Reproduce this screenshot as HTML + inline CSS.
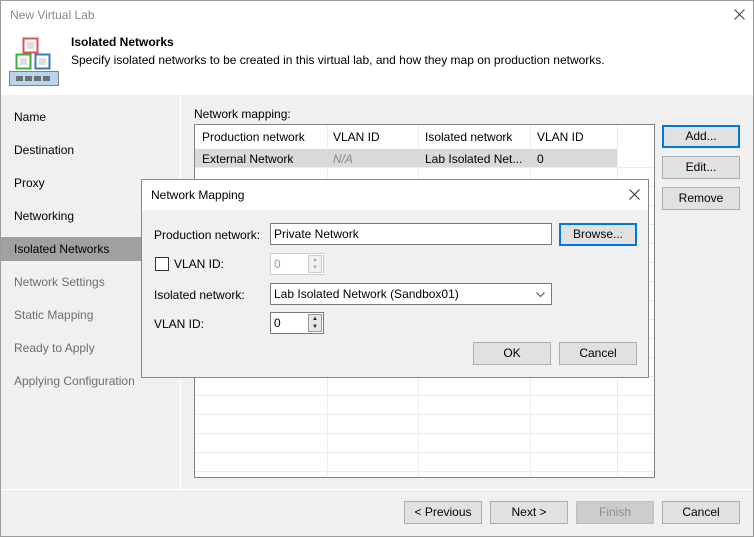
<!DOCTYPE html><html><head><style>
*{box-sizing:border-box;margin:0;padding:0}
body{width:754px;height:537px;position:relative;overflow:hidden;font-family:"Liberation Sans",sans-serif;font-size:12px;color:#000;background:#f0f0f0}
.a{position:absolute}
.btn{position:absolute;border:1px solid #adadad;background:#e1e1e1;text-align:center;line-height:21px;font-size:12px}
.nav{position:absolute;left:14px;font-size:12px}
.g{color:#6d6d6d}
.inp{position:absolute;background:#fff;border:1px solid #7a7a7a;padding-left:3px;line-height:20px}
</style></head><body>
<div class="a" style="left:0;top:0;width:754px;height:537px;border:1px solid #9a9a9a"></div>
<div class="a" style="left:1px;top:1px;width:752px;height:94px;background:#fff"></div>
<div class="a" style="left:10px;top:8px;color:#8a8a8a;font-size:12px">New Virtual Lab</div>
<svg class="a" style="left:734px;top:9px" width="11" height="11"><path d="M0.5 0.5L10.5 10.5M10.5 0.5L0.5 10.5" stroke="#444" stroke-width="1.1"/></svg>
<svg class="a" style="left:8px;top:37px" width="52" height="50">
<rect x="15.5" y="1.5" width="14" height="14" fill="#fff" stroke="#e05050" stroke-width="2"/><rect x="19" y="5" width="7" height="7" fill="#ddd"/>
<rect x="8.5" y="17.5" width="14" height="14" fill="#fff" stroke="#3ab03a" stroke-width="2"/><rect x="12" y="21" width="7" height="7" fill="#ddd"/>
<rect x="27.5" y="17.5" width="14" height="14" fill="#fff" stroke="#3a78c0" stroke-width="2"/><rect x="31" y="21" width="7" height="7" fill="#ddd"/>
<rect x="1.5" y="34.5" width="49" height="14" fill="#b8d4ee" stroke="#808080"/>
<g fill="#707070"><rect x="8" y="39" width="7" height="5"/><rect x="17" y="39" width="7" height="5"/><rect x="26" y="39" width="7" height="5"/><rect x="35" y="39" width="7" height="5"/></g>
</svg>
<div class="a" style="left:71px;top:35px;font-weight:bold">Isolated Networks</div>
<div class="a" style="left:71px;top:53px">Specify isolated networks to be created in this virtual lab, and how they map on production networks.</div>
<div class="a" style="left:180px;top:95px;width:1px;height:394px;background:#fff"></div>
<div class="a" style="left:1px;top:237px;width:179px;height:24px;background:#a0a0a0"></div>
<div class="nav" style="top:110px">Name</div>
<div class="nav" style="top:143px">Destination</div>
<div class="nav" style="top:176px">Proxy</div>
<div class="nav" style="top:209px">Networking</div>
<div class="nav" style="top:242px">Isolated Networks</div>
<div class="nav g" style="top:275px">Network Settings</div>
<div class="nav g" style="top:308px">Static Mapping</div>
<div class="nav g" style="top:341px">Ready to Apply</div>
<div class="nav g" style="top:374px">Applying Configuration</div>
<div class="a" style="left:194px;top:107px">Network mapping:</div>
<div class="a" style="left:194px;top:124px;width:461px;height:354px;background:#fff;border:1px solid #828282;overflow:hidden">
<svg width="461" height="354" class="a" style="left:0;top:0">
<g stroke="#e6edf5"><line x1="132.5" y1="0" x2="132.5" y2="354"/><line x1="223.5" y1="0" x2="223.5" y2="354"/><line x1="335.5" y1="0" x2="335.5" y2="354"/><line x1="422.5" y1="0" x2="422.5" y2="354"/></g>
<g stroke="#e6edf5">
<line x1="0" y1="42.5" x2="461" y2="42.5"/><line x1="0" y1="61.5" x2="461" y2="61.5"/><line x1="0" y1="80.5" x2="461" y2="80.5"/><line x1="0" y1="99.5" x2="461" y2="99.5"/><line x1="0" y1="118.5" x2="461" y2="118.5"/><line x1="0" y1="137.5" x2="461" y2="137.5"/><line x1="0" y1="156.5" x2="461" y2="156.5"/><line x1="0" y1="175.5" x2="461" y2="175.5"/><line x1="0" y1="194.5" x2="461" y2="194.5"/><line x1="0" y1="213.5" x2="461" y2="213.5"/><line x1="0" y1="232.5" x2="461" y2="232.5"/><line x1="0" y1="251.5" x2="461" y2="251.5"/><line x1="0" y1="270.5" x2="461" y2="270.5"/><line x1="0" y1="289.5" x2="461" y2="289.5"/><line x1="0" y1="308.5" x2="461" y2="308.5"/><line x1="0" y1="327.5" x2="461" y2="327.5"/><line x1="0" y1="346.5" x2="461" y2="346.5"/></g>
<rect x="0" y="24" width="422" height="18" fill="#d9d9d9"/>
</svg>
<div class="a" style="left:7px;top:5px">Production network</div><div class="a" style="left:138px;top:5px">VLAN ID</div><div class="a" style="left:230px;top:5px">Isolated network</div><div class="a" style="left:342px;top:5px">VLAN ID</div>
<div class="a" style="left:7px;top:27px">External Network</div><div class="a" style="left:138px;top:27px;color:#8a8a8a;font-style:italic">N/A</div><div class="a" style="left:230px;top:27px">Lab Isolated Net...</div><div class="a" style="left:342px;top:27px">0</div>
</div>
<div class="btn" style="left:662px;top:125px;width:78px;height:23px;border:2px solid #0078d7;line-height:19px">Add...</div>
<div class="btn" style="left:662px;top:156px;width:78px;height:23px">Edit...</div>
<div class="btn" style="left:662px;top:187px;width:78px;height:23px">Remove</div>
<div class="a" style="left:1px;top:489px;width:752px;height:1px;background:#fff"></div>
<div class="btn" style="left:404px;top:501px;width:78px;height:23px">&lt; Previous</div>
<div class="btn" style="left:490px;top:501px;width:78px;height:23px">Next &gt;</div>
<div class="btn" style="left:576px;top:501px;width:78px;height:23px;background:#ccc;border-color:#bfbfbf;color:#8d8d8d">Finish</div>
<div class="btn" style="left:662px;top:501px;width:78px;height:23px">Cancel</div>
<div class="a" style="left:141px;top:179px;width:508px;height:199px;background:#f0f0f0;border:1px solid #888">
<div class="a" style="left:0;top:0;width:506px;height:30px;background:#fff"></div>
<div class="a" style="left:9px;top:8px">Network Mapping</div>
<svg class="a" style="left:487px;top:9px" width="11" height="11"><path d="M0.5 0.5L10.5 10.5M10.5 0.5L0.5 10.5" stroke="#333" stroke-width="1.1"/></svg>
<div class="a" style="left:12px;top:48px">Production network:</div>
<div class="inp" style="left:128px;top:43px;width:282px;height:22px">Private Network</div>
<div class="btn" style="left:417px;top:43px;width:78px;height:23px;border:2px solid #0078d7;line-height:19px">Browse...</div>
<div class="a" style="left:13px;top:77px;width:14px;height:14px;border:1px solid #333;background:#fff"></div>
<div class="a" style="left:32px;top:77px">VLAN ID:</div>
<div class="inp" style="left:128px;top:73px;width:54px;height:22px;border-color:#ccc;color:#999">0</div>
<div class="a" style="left:166px;top:75px;width:14px;height:18px;border:1px solid #ccc;background:#f0f0f0;font-size:6px;color:#aaa;text-align:center;line-height:8px">▲<br>▼</div>
<div class="a" style="left:12px;top:108px">Isolated network:</div>
<div class="inp" style="left:128px;top:103px;width:282px;height:22px;border-color:#7a7a7a">Lab Isolated Network (Sandbox01)</div>
<svg class="a" style="left:394px;top:112px" width="9" height="6"><path d="M0.5 0.5L4.5 4.5L8.5 0.5" stroke="#555" fill="none"/></svg>
<div class="a" style="left:12px;top:137px">VLAN ID:</div>
<div class="inp" style="left:128px;top:132px;width:54px;height:22px">0</div>
<div class="a" style="left:166px;top:134px;width:14px;height:18px;border:1px solid #999;background:#e6e6e6;font-size:6px;color:#222;text-align:center;line-height:8px">▲<br>▼</div>
<div class="btn" style="left:331px;top:162px;width:78px;height:23px">OK</div>
<div class="btn" style="left:417px;top:162px;width:78px;height:23px">Cancel</div>
</div>
</body></html>
